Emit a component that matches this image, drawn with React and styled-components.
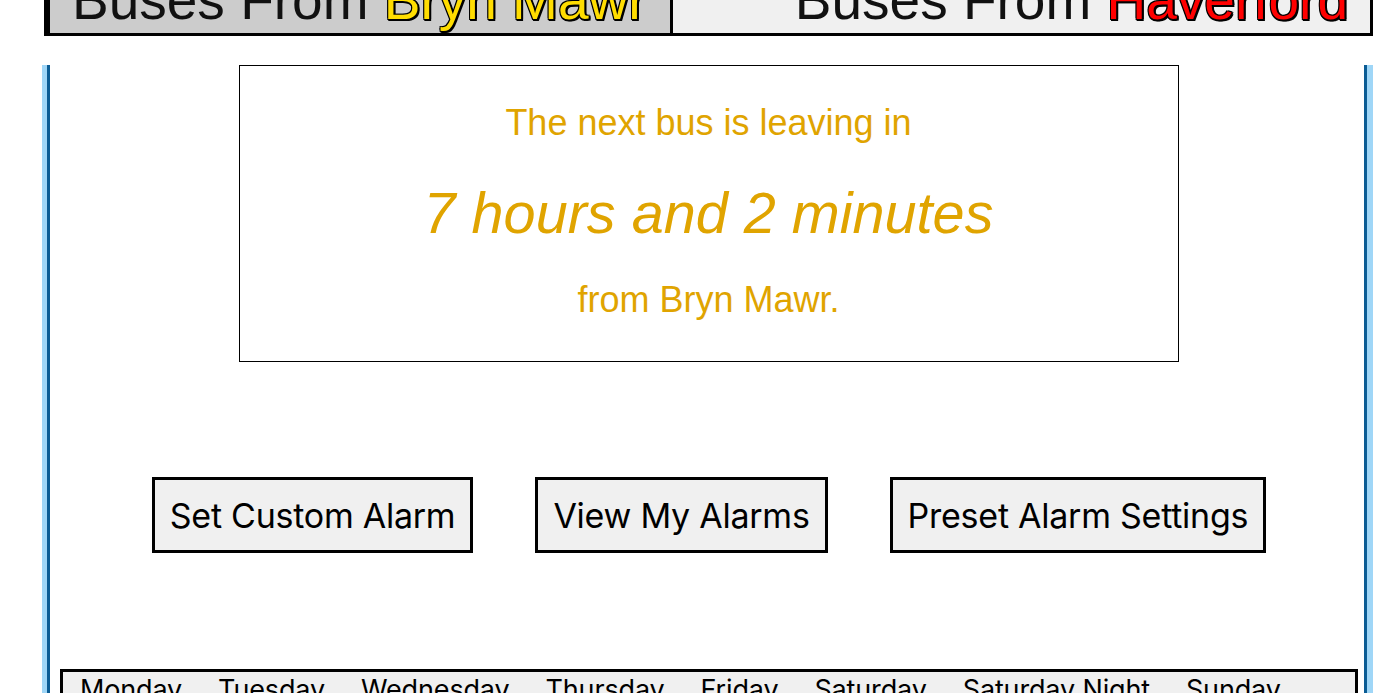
import React from "react";
import styled, { createGlobalStyle } from "styled-components";

const Global = createGlobalStyle`
  html, body { margin: 0; padding: 0; background: #fff; overflow: hidden; }
  body { font-family: "Liberation Sans", Arial, sans-serif; }
`;

const Page = styled.div`
  margin: -35px 20px 0 42px;
  height: 760px;
`;

const TabBar = styled.div`
  display: flex;
  margin: 0 0 29px 2px;
  border: 3px solid #000;
`;

const Tab = styled.div`
  box-sizing: border-box;
  font-family: "Liberation Sans", Arial, sans-serif;
  font-size: 55px;
  line-height: normal;
  padding: 0 22px 1px 22px;
  white-space: nowrap;
  overflow: hidden;
  background: ${(p) => (p.$active ? "#cccccc" : "#f0f0f0")};
  text-align: ${(p) => p.$align};
  ${(p) => (p.$active ? "flex: 0 0 626px; border-left: 3px solid #000; border-right: 3px solid #000;" : "flex: 1 1 auto;")}
  color: #111;
`;

const Campus = styled.span`
  color: ${(p) => p.$color};
  text-shadow: 2px 2px 0 #000, -1px -1px 0 #000, 1px -1px 0 #000, -1px 1px 0 #000, 2px 0 0 #000, 0 2px 0 #000;
`;

const Outer = styled.div`
  border-left: 5px solid #9fd6f7;
  border-right: 6px solid #9fd6f7;
  height: 700px;
`;

const Panel = styled.div`
  border-left: 3px solid #0b5c94;
  border-right: 3px solid #0b5c94;
  height: 100%;
  display: flex;
  flex-direction: column;
  align-items: stretch;
`;

const TimeBox = styled.div`
  box-sizing: border-box;
  align-self: center;
  width: 940px;
  height: 297px;
  margin-left: 3px;
  border: 1px solid #000;
  display: flex;
  flex-direction: column;
  align-items: center;
  color: #e0a400;
  font-family: "Liberation Sans", Arial, sans-serif;
  padding-top: 36px;
`;

const Line = styled.div`
  font-size: ${(p) => p.$size}px;
  font-style: ${(p) => (p.$italic ? "italic" : "normal")};
  margin-top: ${(p) => p.$gap || 0}px;
  line-height: normal;
  white-space: nowrap;
`;

const ButtonRow = styled.div`
  display: flex;
  justify-content: center;
  gap: 62px;
  margin-top: 115px;
  margin-left: 4px;
`;

const Button = styled.button`
  box-sizing: border-box;
  height: 76px;
  padding: 0 15px;
  border: 3px solid #000;
  background: #f0f0f0;
  color: #000;
  font-family: "Inter", "Roboto", sans-serif;
  font-size: 34px;
  letter-spacing: -0.25px;
  cursor: pointer;
`;

const DayBar = styled.div`
  margin: 116px 6px 0 10px;
  border: 3px solid #000;
  background: #f0f0f0;
  display: flex;
  padding: 1px 0 0 0;
  height: 60px;
`;

const Day = styled.div`
  font-family: "Inter", "Roboto", sans-serif;
  font-size: 27px;
  letter-spacing: -0.15px;
  padding: 0 18px;
  white-space: nowrap;
  color: #000;
  &:first-child { padding-left: 17px; }
`;

const days = ["Monday", "Tuesday", "Wednesday", "Thursday", "Friday", "Saturday", "Saturday Night", "Sunday"];

export default function App() {
  return (
    <>
      <Global />
      <Page>
        <TabBar>
          <Tab $active $align="left">
            Buses From <Campus $color="#ffdd00">Bryn Mawr</Campus>
          </Tab>
          <Tab $align="right">
            Buses From <Campus $color="#ff0000">Haverford</Campus>
          </Tab>
        </TabBar>
        <Outer>
          <Panel>
            <TimeBox>
              <Line $size={36}>The next bus is leaving in</Line>
              <Line $size={57.6} $italic $gap={36}>7 hours and 2 minutes</Line>
              <Line $size={36} $gap={33}>from Bryn Mawr.</Line>
            </TimeBox>
            <ButtonRow>
              <Button>Set Custom Alarm</Button>
              <Button>View My Alarms</Button>
              <Button>Preset Alarm Settings</Button>
            </ButtonRow>
            <DayBar>
              {days.map((d) => (
                <Day key={d}>{d}</Day>
              ))}
            </DayBar>
          </Panel>
        </Outer>
      </Page>
    </>
  );
}
